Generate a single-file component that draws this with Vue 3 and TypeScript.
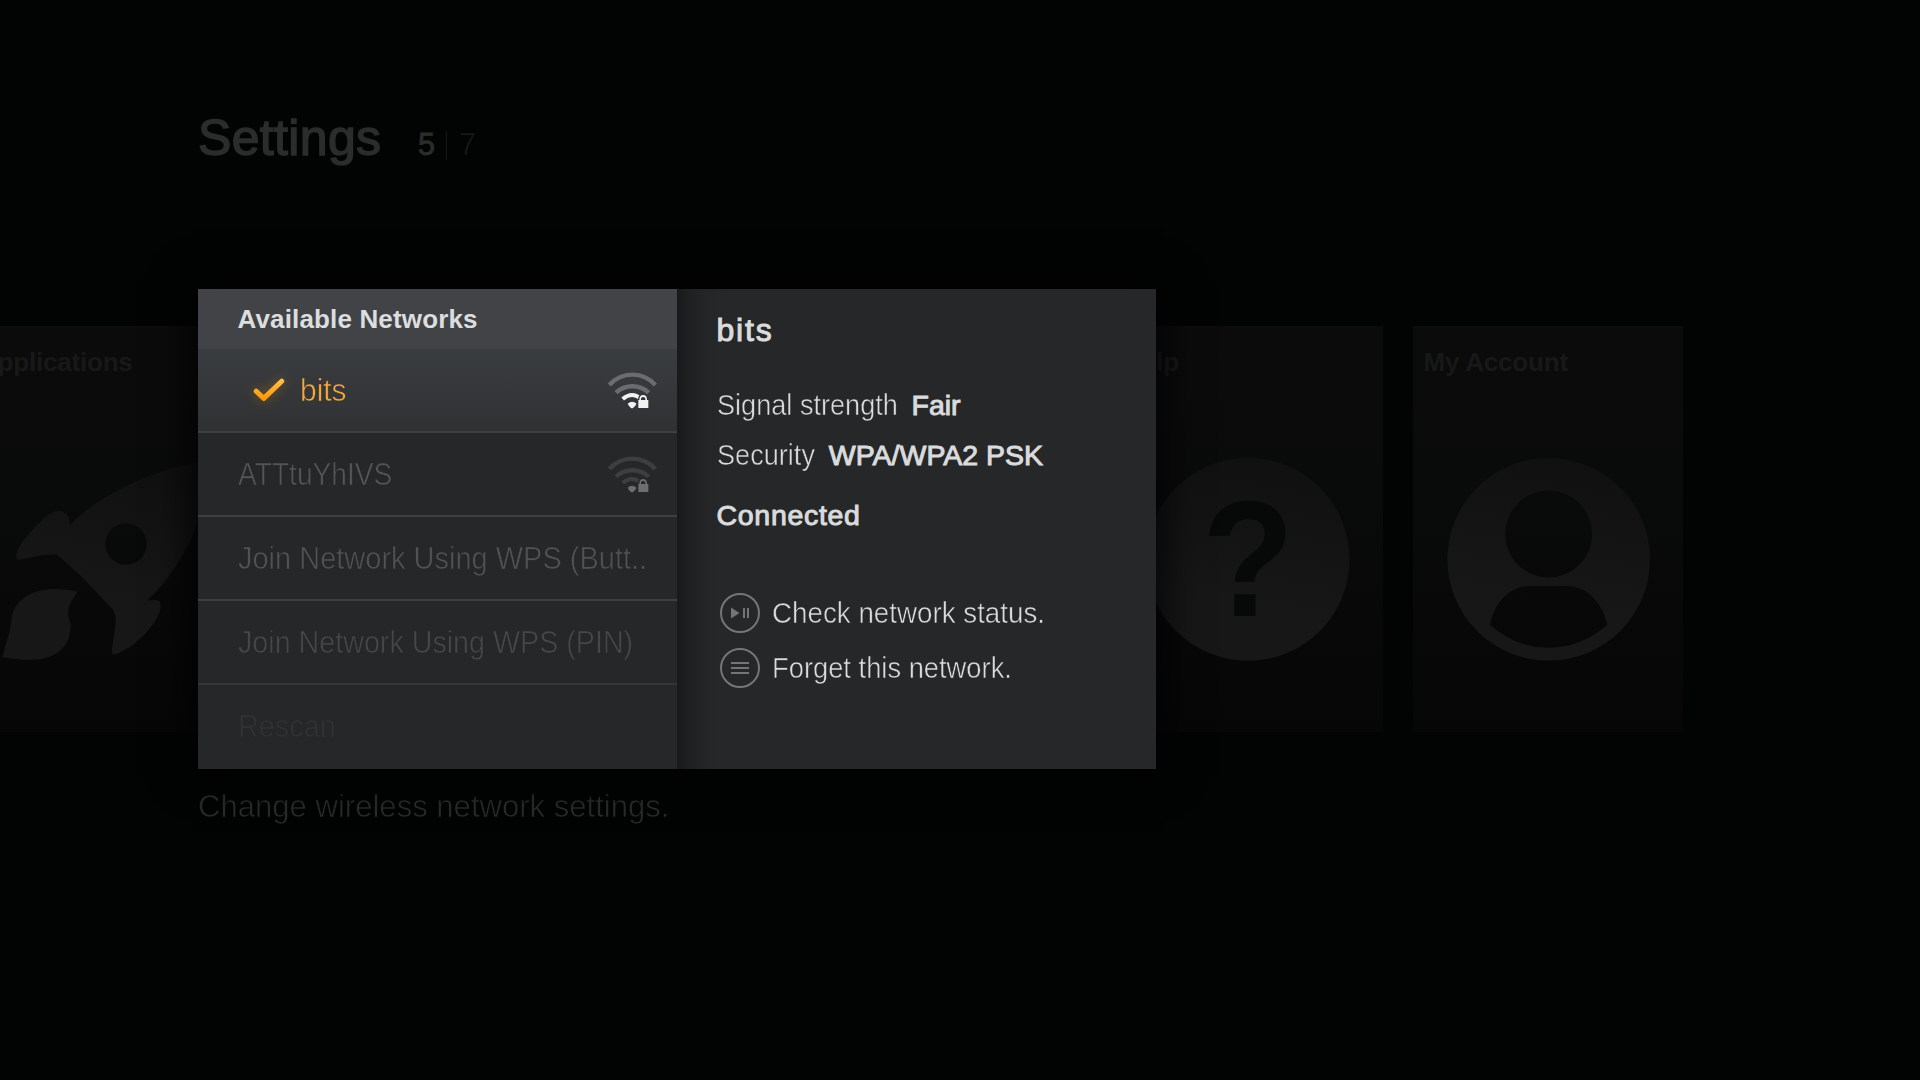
<script setup lang="ts">
interface NetworkRow {
  label: string
  tone: string
  active?: boolean
  wifi?: 'fair' | 'weak'
}

const rows: NetworkRow[] = [
  { label: 'bits', tone: 'on', active: true, wifi: 'fair' },
  { label: 'ATTtuYhIVS', tone: 't1', wifi: 'weak' },
  { label: 'Join Network Using WPS (Butt..', tone: 't2' },
  { label: 'Join Network Using WPS (PIN)', tone: 't3' },
  { label: 'Rescan', tone: 't4' },
]
</script>

<template>
  <div class="screen">
    <header class="head">
      <h1>Settings</h1>
      <span class="now">5</span><i class="bar"></i><span class="total">7</span>
    </header>

    <div class="tiles">
      <section class="tile apps">
        <h2>Applications</h2>
        <svg width="270" height="350" viewBox="0 0 270 350">
          <defs>
            <linearGradient id="ink" x1="0.6" y1="0" x2="0.4" y2="1">
              <stop offset="0" stop-color="#101010" /><stop offset="0.75" stop-color="#171717" />
            </linearGradient>
          </defs>
          <path fill="url(#ink)" fill-rule="evenodd" d="M244 78C228 80 208 84 190 90.3C158 101 121 121 100 143C100 134 96 129 88.3 129C80 129 70 139 56.7 154.7C51 161 48 166 46.7 171C46 175 46 178 50 177.5C60 176 74 171.5 86.7 172.3L110 193L141.7 226.3C145 230 145.7 234 145.7 238C145.5 250 142 260 142 271C142.5 273 145 272.5 147 271.8C162 266 182 248 188.3 233C191 227 192 220 188 218.5C184 217.5 181 218.5 176.7 218.7C200 199 222 160 227 141C236 118 242 100 244 78ZM156 141.3A20.7 20.7 0 1 0 156 182.7A20.7 20.7 0 1 0 156 141.3Z" />
          <path fill="#171717" d="M107.3 209.7C90 206 70 205 55 215.3C46 221 42.5 229 41.5 238C40 251 35 264 32.3 275.3C48 278 71 281 86.7 271.3C96 265 99.5 257 100 249.7C103 241 97.5 238 98.3 229.7C98.5 222 104 215 107.3 209.7Z" />
        </svg>
      </section>
      <div class="slot"></div>
      <section class="tile">
        <h2>Help</h2>
        <svg width="270" height="350" viewBox="0 0 270 350">
          <circle cx="135" cy="177.3" r="101.5" fill="url(#ink)" />
          <text x="0" y="0" transform="translate(135 233.7) scale(0.92 1.01)" class="q">?</text>
        </svg>
      </section>
      <section class="tile">
        <h2>My Account</h2>
        <svg width="270" height="350" viewBox="0 0 270 350">
          <path fill="url(#ink)" fill-rule="evenodd" d="M135.7 76A101.3 101.3 0 1 0 135.7 278.6A101.3 101.3 0 1 0 135.7 76ZM135.7 108.5A43.5 43.5 0 1 1 135.7 195.5A43.5 43.5 0 1 1 135.7 108.5ZM77 243C81 220 97 204 117 204H154C175 204 190 222 194.3 243Q168 265.7 135.7 265.7Q103 265.7 77 243Z" />
        </svg>
      </section>
    </div>

    <p class="caption"><span class="fit">Change wireless network settings.</span></p>

    <div class="dialog">
      <div class="list">
        <h3>Available Networks</h3>
        <div v-for="r in rows" :key="r.label" class="row" :class="[r.tone, { active: r.active }]">
          <svg v-if="r.active" class="check" width="32" height="26" viewBox="0 0 32 26">
            <defs>
              <linearGradient id="amber" x1="0" y1="0" x2="0" y2="1">
                <stop offset="0" stop-color="#ffbe45" /><stop offset="1" stop-color="#fb9a0c" />
              </linearGradient>
            </defs>
            <path d="M3.2 14.2L10.8 21.4L28.7 4.2" fill="none" stroke="url(#amber)" stroke-width="5" stroke-linejoin="round" stroke-linecap="round" />
          </svg>
          <span class="name fit">{{ r.label }}</span>
          <svg v-if="r.wifi" class="wifi" :class="r.wifi" width="50" height="38" viewBox="50 63 150 114" fill="none">
            <path class="far" stroke-width="13" d="M57 105A92 92 0 0 1 195 105" />
            <path class="far" stroke-width="13" d="M77 128A72 72 0 0 1 175 128" />
            <path class="near" stroke-width="12" d="M97 147Q124 124 151 145" />
            <path class="dot" d="M112 161Q125 149 139 161Q134 169 129 173Q125 176 121 173Q116 169 112 161Z" />
            <path class="cut" d="M139 180V149H143Q143 131 158.5 131Q174 131 174 149H179V180Z" />
            <path class="lock" fill-rule="evenodd" d="M144 150H147Q147 135 158.5 135Q170 135 170 150H174V174H144ZM152 150H165Q166 141 158.5 141Q151 141 152 150Z" />
          </svg>
        </div>
      </div>

      <div class="detail">
        <h3>bits</h3>
        <p class="info"><span class="thin fit">Signal strength</span><b>Fair</b></p>
        <p class="info sec"><span class="thin fit">Security</span><b>WPA/WPA2 PSK</b></p>
        <p class="info state"><b>Connected</b></p>
        <div class="action">
          <svg width="40" height="40" viewBox="0 0 40 40">
            <circle cx="20" cy="20" r="19" fill="none" stroke="#747577" stroke-width="2" />
            <path fill="#747577" d="M11 14.5L19.5 20L11 25.5ZM23 15H25V25H23ZM27 15H29V25H27Z" />
          </svg>
          <span class="thin fit">Check network status.</span>
        </div>
        <div class="action">
          <svg width="40" height="40" viewBox="0 0 40 40">
            <circle cx="20" cy="20" r="19" fill="none" stroke="#747577" stroke-width="2" />
            <path fill="#747577" d="M11 14H29V16H11ZM11 19H29V21H11ZM11 24H29V26H11Z" />
          </svg>
          <span class="thin fit forget">Forget this network.</span>
        </div>
      </div>
    </div>
  </div>
</template>

<style>
body {
  margin: 0;
  background: #020403;
}
</style>

<style scoped>
.screen {
  position: relative;
  width: 1920px;
  height: 1080px;
  overflow: hidden;
  background: #020403;
  font-family: 'Liberation Sans', Arial, sans-serif;
  white-space: nowrap;
}
h1, h2, h3, p { margin: 0; font-weight: 400; }
.fit { display: inline-block; transform-origin: 0 50%; }

.head {
  display: flex;
  align-items: baseline;
  height: 218px;
  padding: 108px 0 0 198px;
  box-sizing: border-box;
}
h1 {
  font-size: 50px;
  line-height: 60px;
  letter-spacing: 0.35px;
  color: #2b2c2c;
  -webkit-text-stroke: 1.5px #2b2c2c;
}
.now {
  margin-left: 36.5px;
  font-size: 30.5px;
  color: #2b2c2c;
  -webkit-text-stroke: 0.8px #2b2c2c;
}
.bar {
  align-self: flex-start;
  width: 1px;
  height: 29px;
  margin: 23px 12px 0 11px;
  background: #151717;
}
.total {
  font-size: 30.5px;
  color: #171919;
  -webkit-text-stroke: 0.6px #020403;
}

.tiles {
  display: flex;
  gap: 30px;
  margin: 108px 0 0 -30px;
}
.tile {
  flex: none;
  width: 270px;
  height: 406px;
  overflow: hidden;
  background: linear-gradient(#0b0b0b, #090a0a 40%, #060606);
}
.tile h2 {
  padding: 16px 0 0 10.5px;
  font-size: 26px;
  font-weight: 700;
  line-height: 40px;
  letter-spacing: -0.2px;
  color: #171818;
}
.tile.apps h2 { padding-left: 9px; }
.tile svg { display: block; }
.slot { flex: none; width: 813px; }
.q {
  font-size: 164px;
  font-weight: 700;
  text-anchor: middle;
  fill: #070808;
}

.caption {
  margin-top: 53.6px;
  padding-left: 198px;
  font-size: 32px;
  line-height: 40px;
  color: #292a2a;
  -webkit-text-stroke: 0.6px #020403;
}
.caption .fit { transform: scaleX(0.971); }

.dialog {
  position: absolute;
  left: 198px;
  top: 289px;
  display: flex;
  width: 958px;
  height: 480px;
  box-shadow: 0 0 36px 8px rgba(0, 0, 0, 0.8);
}
.list {
  width: 479px;
  background: #262728;
}
.list h3 {
  height: 60px;
  padding-left: 39.5px;
  font-size: 26px;
  font-weight: 700;
  line-height: 60px;
  letter-spacing: 0.15px;
  color: #dcddde;
  background: #414347;
}
.row {
  display: flex;
  align-items: center;
  height: 84px;
  padding: 0 20px 0 39.5px;
  box-sizing: border-box;
  border-bottom: 2px solid #3e3f41;
  font-size: 31px;
  line-height: 40px;
}
.name {
  padding-top: 2px;
  transform: scaleX(0.93);
  -webkit-text-stroke: 0.6px #262728;
}
.wifi { margin-left: auto; flex: none; }
.t1 { color: #545557; }
.t1 .name { transform: scaleX(0.908); }
.t2 { color: #515254; }
.t2 .name { transform: scaleX(0.935); }
.t3 { color: #464749; border-color: #353638; }
.t3 .name { transform: scaleX(0.925); }
.t4 { color: #313234; border: 0; }
.t4 .name { padding-top: 0; }
.on {
  padding-left: 55px;
  background: linear-gradient(#3a3d40, #303133);
}
.on .name {
  margin-left: 14.5px;
  color: #f5a93c;
  transform: scaleX(0.965);
  -webkit-text-stroke-color: #353739;
}
.check { filter: drop-shadow(0 0 6px rgba(240, 130, 10, 0.45)); }
.fair .far { stroke: #6b6c6e; }
.fair .near { stroke: #f2f2f3; }
.fair .dot, .fair .lock { fill: #f2f2f3; }
.fair .cut { fill: #343638; }
.weak .far, .weak .near { stroke: #3d3e40; }
.weak .dot, .weak .lock { fill: #6d6e70; }
.weak .cut { fill: #262728; }

.detail {
  width: 479px;
  padding: 21px 0 0 39.5px;
  box-sizing: border-box;
  background: linear-gradient(90deg, #18191a, #1f2022 12px, #242527 28px, #262729 44px);
  color: #dadbdc;
}
.detail h3 {
  margin-bottom: 30px;
  font-size: 32px;
  line-height: 40px;
  letter-spacing: 1.8px;
  -webkit-text-stroke: 1px #dadbdc;
}
.info {
  height: 50px;
  font-size: 29px;
  line-height: 50px;
}
.info b {
  margin-left: 1.5px;
  font-size: 28.5px;
  font-weight: 400;
  -webkit-text-stroke: 1px #dadbdc;
}
.sec b { margin-left: 7.5px; }
.state { margin: 10px 0 53px; }
.state b { margin-left: 0; letter-spacing: 0.7px; }
.thin {
  transform: scaleX(0.935);
  -webkit-text-stroke: 0.5px #262729;
}
.action {
  display: flex;
  align-items: center;
  gap: 11.5px;
  height: 40px;
  margin: 0 0 15px 3.5px;
  font-size: 29px;
}
.action .thin { transform: scaleX(0.957); }
.action .forget { transform: scaleX(0.942); }
</style>
